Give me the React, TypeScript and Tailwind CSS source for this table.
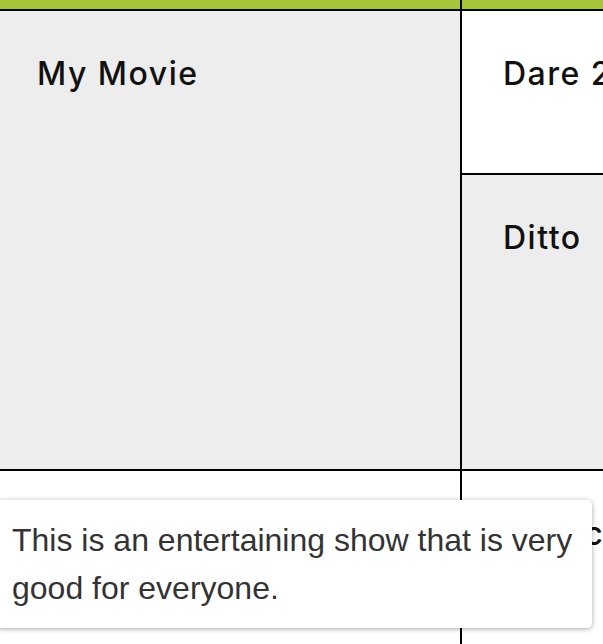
export default function App() {
  const heading = "font-['Inter',sans-serif] font-medium text-[32px] leading-[36px] text-[#111] tracking-[1.5px]";
  return (
    <div className="relative h-[644px] w-[603px] overflow-hidden bg-white">
      <div className="w-[924px]">
        <div className="flex h-[11px] border-b-2 border-black">
          <div className="w-[462px] border-r-2 border-black bg-[#a5c63b]" />
          <div className="flex-1 bg-[#a5c63b]" />
        </div>

        <div className="flex h-[460px] border-b-2 border-black">
          <div className="w-[462px] border-r-2 border-black bg-[#ededed] pl-[37px] pt-[45px]">
            <div className={heading}>My Movie</div>
          </div>
          <div className="flex flex-1 flex-col">
            <div className="h-[164px] border-b-2 border-black bg-white pl-[41px] pt-[45px]">
              <div className={heading}>Dare 2</div>
            </div>
            <div className="flex-1 bg-[#ededed] pl-[41px] pt-[45px]">
              <div className={heading}>Ditto</div>
            </div>
          </div>
        </div>

        <div className="flex h-[200px]">
          <div className="w-[462px] border-r-2 border-black bg-white pl-[37px] pt-[45px]">
            <div className={heading}>Family</div>
            <div className={`${heading} mt-[40px] pl-[26px]`}>Holiday</div>
          </div>
          <div className="flex-1 bg-white pl-[41px] pt-[45px]">
            <div className={heading}>Magic</div>
          </div>
        </div>
      </div>

      <div className="absolute left-[-4px] top-[500px] w-[596px] rounded-[5px] bg-white pb-4 pl-4 pr-3 pt-4 font-['Liberation_Sans',Arial,sans-serif] text-[32px] leading-[48px] text-[#333] shadow-[0_1px_5px_rgba(0,0,0,0.35)]">
        This is an entertaining show that is very good for everyone.
      </div>
    </div>
  );
}
